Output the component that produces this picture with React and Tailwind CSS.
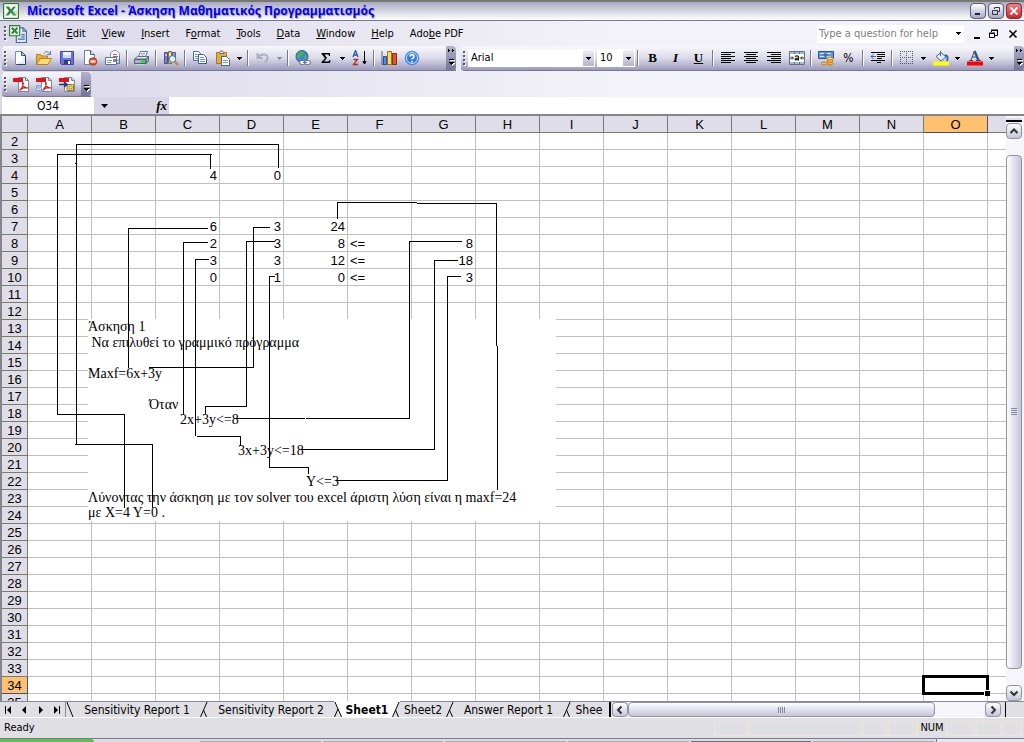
/* ═══════════════════════════════════════════════════════════════
   App.jsx — Spreadsheet window (menus, toolbars, sheet, tabs)
   ═══════════════════════════════════════════════════════════════ */

import { useState } from 'react'
import clsx from 'clsx'

const COLUMNS = ['A', 'B', 'C', 'D', 'E', 'F', 'G', 'H', 'I', 'J', 'K', 'L', 'M', 'N', 'O']
const ROWS = Array.from({ length: 34 }, (_, i) => i + 2)

const CELLS = {
  C4: 4, D4: 0,
  C7: 6, D7: 3, E7: 24,
  C8: 2, D8: 3, E8: 8, F8: '<=', G8: 8,
  C9: 3, D9: 3, E9: 12, F9: '<=', G9: 18,
  C10: 0, D10: 1, E10: 0, F10: '<=', G10: 3,
}

const MENUS = [
  ['', 'F', 'ile'],
  ['', 'E', 'dit'],
  ['', 'V', 'iew'],
  ['', 'I', 'nsert'],
  ['F', 'o', 'rmat'],
  ['', 'T', 'ools'],
  ['', 'D', 'ata'],
  ['', 'W', 'indow'],
  ['', 'H', 'elp'],
  ['Ado', 'b', 'e PDF'],
]

// Connectors between the cells and the exercise text, in sheet coordinates
const CONNECTORS = [
  'M212 154.5H57.5V414.5H124.5V508M210.5 154V169',
  'M278.5 168V144.5H76.5V444.5M75 444.5H152.5V508M75 163.5h1',
  'M208 228.5H128.5V368',
  'M208 242.5H183.5V415',
  'M209 259.5H195.5V436M197 436.5H240.5V446',
  'M270 227.5H253.5V367.5H149',
  'M275 241.5H246.5V406.5H205.5V414',
  'M275 276.5H269.5V467.5H308.5V474',
  'M337.5 219V202.5H417M417 203.5H496.5V346M497.5 346V490',
  'M462 241.5H409.5V418.5H306M305 418.5H236',
  'M458 260.5H434.5V449.5H301',
  'M461 276.5H447.5V480.5H336',
]

/* ── Small shared pieces ─────────────────────────────────────── */

function Icon({ children, size = 16 }) {
  return (
    <svg width={size} height={size} viewBox="0 0 16 16" fill="none" aria-hidden="true" className="shrink-0">
      {children}
    </svg>
  )
}

function Arrow({ fill = '#000' }) {
  return (
    <svg width="5" height="3" viewBox="0 0 5 3" shapeRendering="crispEdges" aria-hidden="true">
      <path d="M0 0h5v1H0zM1 1h3v1H1zM2 2h1v1H2z" fill={fill} />
    </svg>
  )
}

function Tool({ label, children }) {
  return (
    <button type="button" aria-label={label} className="flex h-6 w-[23px] shrink-0 items-center justify-center">
      {children}
    </button>
  )
}

function Drop({ label, fill }) {
  return (
    <button type="button" aria-label={label} className="flex h-6 w-[11px] shrink-0 items-center justify-center">
      <Arrow fill={fill} />
    </button>
  )
}

function Sep() {
  return (
    <span className="flex h-6 w-[6px] shrink-0 items-center justify-center">
      <span className="h-4 w-[2px] border-r border-white bg-[#77769c]" />
    </span>
  )
}

function Grip() {
  return (
    <svg width="3" height="15" viewBox="0 0 3 15" shapeRendering="crispEdges" aria-hidden="true" className="mx-[2px] shrink-0">
      {[0, 4, 8, 12].map(y => (
        <g key={y}>
          <path d={`M1 ${y + 1}h2v2H1z`} fill="#fff" />
          <path d={`M0 ${y}h2v2H0z`} fill="#545478" />
        </g>
      ))}
    </svg>
  )
}

function ToolbarEnd({ more }) {
  return (
    <button
      type="button"
      aria-label="Toolbar options"
      className="flex h-full w-[10px] shrink-0 flex-col items-center justify-end rounded-r-sm bg-linear-to-b from-[#b4b3ca] to-[#75749a] pb-1"
    >
      <svg width="7" height="18" viewBox="0 0 7 18" shapeRendering="crispEdges" aria-hidden="true">
        {more && <path d="M0 1h1v1h1v1H1v1H0zM4 1h1v1h1v1H5v1H4z" fill="#000" />}
        <path d="M2 12h5v1H2zM2 15h5v1H6v1H5v1H4v-1H3z" fill="#fff" />
        <path d="M1 11h5v1H1zM1 14h5v1H5v1H4v1H3v-1H2v-1H1z" fill="#000" />
      </svg>
    </button>
  )
}

const bar = 'flex h-[25px] items-center rounded-l-sm border-b border-[#77769c] bg-linear-to-b from-[#f8f8fc] via-[#dcdbe8] to-[#9c9abb]'

/* ── Icons ───────────────────────────────────────────────────── */

function ExcelMark() {
  return (
    <>
      <path d="M.5.5h15v15H.5z" fill="#cfe6c8" stroke="#2f7a3b" />
      <path d="M2 2h12v12H2z" fill="#fff" />
      <path d="M2.500 3.500H6l2 3 2.500-3H13L9.500 8l4 4.500H10L8 9.500l-2.500 3h-3L6 8z" fill="#2a8a3c" />
      <path d="M10 9h4M10 11h4" stroke="#7ab884" />
    </>
  )
}

function PageIcon() {
  return (
    <>
      <path d="M2.500 1.500h6l4 4v9h-10z" fill="#fff" stroke="#7b92b8" />
      <path d="M12.500 5.500v9h-9" stroke="#27406e" />
      <path d="M8.500 1.500v4h4z" fill="#b9cce8" stroke="#39598c" />
      <path d="M11 7v6H5" stroke="#cddcf1" />
    </>
  )
}

function FolderIcon() {
  return (
    <>
      <path d="M.5 14V4.500h4l1 1.500h6v3" fill="#e8ab3e" stroke="#b5831f" />
      <path d="M.5 14.500 4 8.500h11.500L12 14.500z" fill="#ffd877" stroke="#b78319" />
      <path d="M8 3.500c1-2.500 4-2.500 5.500 0M14.500 1v3.500H11" stroke="#5873a4" />
    </>
  )
}

function SaveIcon() {
  return (
    <>
      <path d="M1.500 1.500h13v13h-12l-1-1z" fill="#6a74dd" stroke="#4147a8" />
      <path d="M4 2h8v6H4z" fill="#f1f4fd" />
      <path d="M4 5h8v3H4z" fill="#cfd8f4" />
      <path d="M5 10h7v4H5z" fill="#333b80" />
      <path d="M9 11h2v3H9z" fill="#fff" />
    </>
  )
}

function PermissionIcon() {
  return (
    <>
      <path d="M2.500.5h6l4 4v10h-10z" fill="#fff" stroke="#6d83a8" />
      <path d="M8.500.5v4h4" fill="#cfdcf0" stroke="#39598c" />
      <circle cx="11" cy="11.500" r="3.800" fill="#e4562e" stroke="#b53a18" />
      <path d="M8.500 11.500h5" stroke="#fff" strokeWidth="2" />
    </>
  )
}

function MailIcon() {
  return (
    <>
      <path d="M5.500 5V3l3-2.500h3l3 3V10h-9z" fill="#f4f6fb" stroke="#8a99b8" />
      <path d="M8 4.500h4M8 6.500h5" stroke="#b7683c" />
      <path d="M.5 7.500h11v7H.5z" fill="#fff" stroke="#5873a4" />
      <path d="M2 10.500h5M2 12.500h4" stroke="#7d94bc" />
      <path d="M8.500 9.500h2v2h-2z" fill="#9fc0e8" stroke="#5873a4" />
      <path d="M12 13.500h2.500V6" stroke="#5873a4" />
    </>
  )
}

function PrintIcon() {
  return (
    <>
      <path d="m4.500 6.500 2-5h7l-2 5" fill="#fff" stroke="#60749c" />
      <path d="M7 3.500h4M6.500 5h4" stroke="#97a8c6" />
      <path d="M.5 9 3.500 6.500h11L12 9z" fill="#e3e9f3" stroke="#5f6f7c" />
      <path d="M.5 9.500H12v4H.5zM12 9.500l2.500-3V11L12 13.500z" fill="#a9b6c0" stroke="#52626f" />
      <path d="M7 10.500h4v2.500H7z" fill="#1fe03b" />
      <path d="M2.500 14.500h8" stroke="#c9d2da" />
    </>
  )
}

function ResearchIcon() {
  return (
    <>
      <path d="M1.500 2.500h3v11h-3z" fill="#7785c4" stroke="#424f90" />
      <path d="M5.500 1.500h3v12h-3z" fill="#e7c069" stroke="#8a6b25" />
      <path d="M9.500 2.500h3v9h-3z" fill="#8a9fcb" stroke="#4a5f95" />
      <path d="M2 5h2M6 4h2M6 6h2" stroke="#fff" />
      <circle cx="9.500" cy="9" r="3.300" fill="#dff0fb" stroke="#4c78a8" />
      <path d="m12 11.500 3 3.500" stroke="#b98743" strokeWidth="2" />
    </>
  )
}

function CopyIcon() {
  return (
    <>
      <path d="M1.500 1.500h5l2 2v7h-7z" fill="#fff" stroke="#4a6ba8" />
      <path d="M3 4.500h4M3 6.500h4M3 8.500h4" stroke="#6f94d2" />
      <path d="M6.500 4.500h5l3 3v6h-8z" fill="#fff" stroke="#3b5c99" />
      <path d="M8 7.500h4M8 9.500h5M8 11.500h5" stroke="#6f94d2" />
    </>
  )
}

function PasteIcon() {
  return (
    <>
      <path d="M1.500 2.500h10v11h-10z" fill="#e3ab40" stroke="#a5782a" />
      <path d="M4.500 3.500v-1l1-1.500h2l1 1.500v1z" fill="#e9e9ee" stroke="#6b6b74" />
      <path d="M6.500 6.500h5l3 3v6h-8z" fill="#fff" stroke="#4a6390" />
      <path d="M8 10.500h5M8 12.500h5" stroke="#6f94d2" />
    </>
  )
}

function UndoIcon() {
  return (
    <path d="M2.500 3v5h5M3 7.500C5 4 13 3 12.500 8c0 2-1.500 3.500-3 4.500" stroke="#aeadc4" strokeWidth="2" />
  )
}

function LinkIcon() {
  return (
    <>
      <circle cx="7" cy="6.500" r="6" fill="#3f86d6" stroke="#2c5c93" />
      <path d="M3 3c2-2 4-2 6-1L8 5 5 6 4 9 1.500 7zM9 6l3-1 .5 3L10 9z" fill="#45b54c" />
      <rect x="4.500" y="10.500" width="6" height="4" rx="2" fill="#eef0f4" stroke="#667080" />
      <rect x="9.500" y="10.500" width="6" height="4" rx="2" fill="#eef0f4" stroke="#667080" />
      <path d="M8 12.500h4" stroke="#667080" />
    </>
  )
}

function SumIcon() {
  return (
    <path d="M3.500 3h8.500v3h-1c0-1-.5-1.500-1.500-1.500H6.500L9 8l-3 3.500h3.500c1 0 1.500-.5 2-1.500h1L12 13H3.500v-1L7 8.200 3.500 4z" fill="#000" />
  )
}

function SortIcon() {
  return (
    <>
      <path d="m1 7 2.500-6.500L6 7M2 5h3" stroke="#2a55b0" strokeWidth="1.300" />
      <path d="M1.500 9.500h4l-4 5h4.500" stroke="#b0302a" strokeWidth="1.300" />
      <path d="M12.500 1v12M11 11.500h3L12.500 14z" stroke="#000" fill="#000" />
    </>
  )
}

function ChartIcon() {
  return (
    <>
      <path d="M1 1v13.500h15" stroke="#4a5f8a" />
      <path d="M2.500 6.500h3v8h-3z" fill="#4f8de6" stroke="#2a4f94" />
      <path d="M6.500 1.500h4v13h-4z" fill="#ffd75a" stroke="#96741c" />
      <path d="M11.500 3.500h4v11h-4z" fill="#e05728" stroke="#8c2d10" />
    </>
  )
}

function HelpIcon() {
  return (
    <>
      <circle cx="8" cy="8" r="6.800" fill="#2f7be0" stroke="#4a86d4" />
      <circle cx="8" cy="8" r="5.500" stroke="#cfe4ff" />
      <path d="M6 6.500C6 4 10.300 4 10 6.500 10 8 8 8 8 9.500M8 11v1.500" stroke="#fff" strokeWidth="1.600" />
    </>
  )
}

function AlignIcon({ d }) {
  return <path d={d} stroke="#000" shapeRendering="crispEdges" />
}

function MergeIcon() {
  return (
    <>
      <path d="M.5 1.500h15v13H.5z" fill="#fff" stroke="#5f7186" />
      <path d="M1 3h14M1 13h14" stroke="#a7bad0" strokeWidth="2" />
      <path d="M5.500 1v3M10.500 1v3M5.500 12v3M10.500 12v3" stroke="#5f7186" />
      <path d="M1 8h3M15 8h-3M3 6.500 4.500 8 3 9.500M13 6.500 11.500 8l1.500 1.500" stroke="#222" />
      <path d="M6 6.500c2-1 3.500-.5 3.500.5v3.500M9 8c-4 0-3.500 3 0 1.500" stroke="#111" strokeWidth="1.200" />
    </>
  )
}

function CurrencyIcon() {
  return (
    <>
      <path d="M.5 1.500h15v7H.5z" fill="#5f93de" stroke="#2d5799" />
      <path d="M2 3.500h11M2 6.500h11" stroke="#dbe9fb" />
      <circle cx="7.500" cy="5" r="2" fill="#3a6cba" />
      <ellipse cx="12" cy="13.500" rx="3" ry="1.500" fill="#f6b93c" stroke="#c27d12" />
      <ellipse cx="12" cy="11" rx="3" ry="1.500" fill="#f6c452" stroke="#c27d12" />
      <ellipse cx="12" cy="8.500" rx="3" ry="1.500" fill="#ffd97a" stroke="#c27d12" />
      <ellipse cx="6" cy="13.500" rx="2.500" ry="1.500" fill="#f6c452" stroke="#c27d12" />
    </>
  )
}

function IndentIcon() {
  return (
    <>
      <path d="M1 2.500h14M7 4.500h8M7 6.500h8M7 8.500h5M1 10.500h14M7 12.500h4" stroke="#000" shapeRendering="crispEdges" />
      <path d="M6 6.500H1M3.500 4 1 6.500 3.500 9" stroke="#3b62ad" />
    </>
  )
}

function BordersIcon() {
  return (
    <path
      d="M1.500 1v13M7.500 1v13M13.500 1v13M1 1.500h13M1 7.500h13M1 13.500h13"
      stroke="#55557a"
      strokeDasharray="1 1"
      shapeRendering="crispEdges"
    />
  )
}

function FillIcon() {
  return (
    <>
      <path d="m3 6.500 5-4 5 4.500-5 4z" fill="#dfe9f8" stroke="#4c6694" />
      <path d="M7.500 1v5" stroke="#4c6694" />
      <path d="M12 5c3 .5 3 3 2 6" stroke="#2f64c0" strokeWidth="2" />
      <path d="M0 11.500h16V15.500H0z" fill="#ff0" />
    </>
  )
}

function FontColorIcon() {
  return (
    <>
      <path d="M4 10 7.500 1M5 7h6M2 10.500h4M9 10.500h5" stroke="#35507f" />
      <path d="m7.500 1 4 9.500" stroke="#35507f" strokeWidth="2.400" />
      <path d="M0 11.500h16V15.500H0z" fill="red" />
    </>
  )
}

function PdfIcon({ variant }) {
  return (
    <>
      <path d="M5.500 1.500h7l3 3v11h-10z" fill="#fff" stroke="#85858f" />
      <path d="M12.500 1.500v3h3" stroke="#85858f" />
      {variant === 'review' ? (
        <>
          <path d="M8 8.500h6.500v6H8z" fill="#ecd95e" stroke="#93812a" />
          <circle cx="11.500" cy="11.500" r="1.500" fill="#fff" stroke="#93812a" />
          <path d="M0 8.500h7M5 6 8 8.500 5 11" stroke="#1c2f86" strokeWidth="1.600" />
        </>
      ) : (
        <path d="M9.500 6c2 2-1 7-3 8.500M9.500 7c0 4 3 5 5.500 5-3-1-6 0-8 2" stroke="#d8121a" strokeWidth="1.200" />
      )}
      {variant === 'mail' && <path d="M.5 9.500h5v5h-5zM.5 10 3 12.500 5.500 10" fill="#c8dcf5" stroke="#7fa3d8" />}
      <path d="M0 2h10v4H0z" fill="#e0121b" />
    </>
  )
}

/* ── Window parts ────────────────────────────────────────────── */

function TitleBar() {
  const button = 'flex h-4 w-4 items-center justify-center rounded-sm border bg-linear-to-b'
  return (
    <header className="flex h-[21px] shrink-0 items-center border-t-2 border-b border-t-[#77786f] border-b-[#77769c] bg-linear-to-b from-[#a9a9c4] via-[#d4d4e0] to-white pr-[2px] pl-[3px]">
      <Icon><ExcelMark /></Icon>
      <h1 className="ml-2 flex-1 truncate font-['Open_Sans','Noto_Sans',sans-serif] text-[12px] leading-4 font-bold text-[#0000f0] [text-shadow:1px_1px_1px_#9c9cc0]">
        Microsoft Excel - Άσκηση Μαθηματικός Προγραμματισμός
      </h1>
      <div className="flex gap-[2px]">
        <button type="button" aria-label="Minimize" className={clsx(button, 'border-[#5c5b80] from-white to-[#a9a8c2]')}>
          <Icon><path d="M5 11h5" stroke="#222244" strokeWidth="2" /></Icon>
        </button>
        <button type="button" aria-label="Restore" className={clsx(button, 'border-[#5c5b80] from-white to-[#a9a8c2]')}>
          <Icon><path d="M6.500 6V4.500h5v4H10M4.500 7.500h5v4h-5z" stroke="#333355" /></Icon>
        </button>
        <button type="button" aria-label="Close" className={clsx(button, 'border-[#8d2433] from-[#e8808a] to-[#c9222f]')}>
          <Icon><path d="m4.500 4.500 7 7M11.500 4.500l-7 7" stroke="#fff" strokeWidth="1.800" /></Icon>
        </button>
      </div>
    </header>
  )
}

function MenuBar() {
  return (
    <div className="flex h-[25px] items-center pl-[2px]">
      <Grip />
      <button type="button" aria-label="Workbook menu" className="flex w-[17px] items-center">
        <Icon size={18}>
          <path d="M6.500 2.500h6l3 3v10h-9z" fill="#dfeafa" stroke="#44699c" />
          <path d="M12.500 2.500v3h3M11 8.500h3M11 10.500h3M8 12.500h6" stroke="#44699c" />
          <path d="M.5.500h9v9h-9z" fill="#e8f3e4" stroke="#2f7a3b" />
          <path d="m2.500 2.500 5 5M7.500 2.500l-5 5" stroke="#2a8a3c" strokeWidth="1.800" />
        </Icon>
      </button>
      <nav className="flex">
        {MENUS.map(([before, key, after]) => (
          <button key={before + key + after} type="button" className="h-5 px-2 text-[11px] leading-4">
            {before}<u>{key}</u>{after}
          </button>
        ))}
      </nav>
      <div className="ml-auto flex h-[18px] w-[147px] items-center bg-white">
        <input
          type="text"
          aria-label="Type a question for help"
          placeholder="Type a question for help"
          className="h-full w-full min-w-0 flex-1 pl-[2px] text-[11px] placeholder:text-[#808080] placeholder:opacity-100"
        />
        <Drop label="Recent questions" />
      </div>
      <div className="flex items-center pr-[3px] pl-[5px]">
        <button type="button" aria-label="Minimize workbook">
          <Icon><path d="M5 12h6" stroke="#000" strokeWidth="2" /></Icon>
        </button>
        <button type="button" aria-label="Restore workbook">
          <Icon><path d="M6.500 6V4.500h6v5H10M4.500 7.500h5v4h-5zM6 4h7M4 7h6" stroke="#000" /></Icon>
        </button>
        <button type="button" aria-label="Close workbook" className="ml-1">
          <Icon><path d="m4.500 4.500 7 7M11.500 4.500l-7 7" stroke="#000" strokeWidth="1.600" /></Icon>
        </button>
      </div>
    </div>
  )
}

function StandardToolbar() {
  return (
    <div role="toolbar" aria-label="Standard" className={clsx(bar, 'w-[454px] shrink-0')}>
      <Grip />
      <Tool label="New"><Icon><PageIcon /></Icon></Tool>
      <Tool label="Open"><Icon><FolderIcon /></Icon></Tool>
      <Tool label="Save"><Icon><SaveIcon /></Icon></Tool>
      <Tool label="Permission"><Icon><PermissionIcon /></Icon></Tool>
      <Tool label="E-mail"><Icon><MailIcon /></Icon></Tool>
      <Sep />
      <Tool label="Print"><Icon><PrintIcon /></Icon></Tool>
      <Sep />
      <Tool label="Research"><Icon><ResearchIcon /></Icon></Tool>
      <Sep />
      <Tool label="Copy"><Icon><CopyIcon /></Icon></Tool>
      <Tool label="Paste"><Icon><PasteIcon /></Icon></Tool>
      <Drop label="Paste options" />
      <Sep />
      <Tool label="Undo"><Icon><UndoIcon /></Icon></Tool>
      <Drop label="Undo history" fill="#8d8ca6" />
      <Sep />
      <Tool label="Hyperlink"><Icon><LinkIcon /></Icon></Tool>
      <Tool label="AutoSum"><Icon><SumIcon /></Icon></Tool>
      <Drop label="More functions" />
      <Tool label="Sort ascending"><Icon><SortIcon /></Icon></Tool>
      <Sep />
      <Tool label="Chart wizard"><Icon><ChartIcon /></Icon></Tool>
      <Tool label="Help"><Icon><HelpIcon /></Icon></Tool>
      <span className="flex-1" />
      <ToolbarEnd more />
    </div>
  )
}

function ComboBox({ label, value, className }) {
  return (
    <div className={clsx('grid h-[18px] shrink-0 items-center border border-white bg-white', className)}>
      <select
        aria-label={label}
        defaultValue={value}
        className="col-start-1 row-start-1 h-4 w-full appearance-none pl-[2px] text-[11px] leading-4"
      >
        <option>{value}</option>
      </select>
      <span className="pointer-events-none col-start-1 row-start-1 flex h-4 w-[11px] items-center justify-center justify-self-end bg-linear-to-b from-[#f0f0f6] to-[#b4b3cb]">
        <Arrow />
      </span>
    </div>
  )
}

function FormattingToolbar() {
  const letter = "font-['Liberation_Serif',serif] text-[13px] leading-4 font-bold"
  return (
    <div role="toolbar" aria-label="Formatting" className={clsx(bar, 'min-w-0 flex-1')}>
      <Grip />
      <ComboBox label="Font" value="Arial" className="w-[127px]" />
      <ComboBox label="Font size" value="10" className="ml-[2px] w-[38px]" />
      <Sep />
      <Tool label="Bold"><span className={letter}>B</span></Tool>
      <Tool label="Italic"><span className={clsx(letter, 'italic')}>I</span></Tool>
      <Tool label="Underline"><span className={clsx(letter, 'underline')}>U</span></Tool>
      <Sep />
      <Tool label="Align left"><Icon><AlignIcon d="M1 2.500h14M1 4.500h10M1 6.500h14M1 8.500h10M1 10.500h14M1 12.500h10" /></Icon></Tool>
      <Tool label="Center"><Icon><AlignIcon d="M1 2.500h14M3 4.500h10M1 6.500h14M3 8.500h10M1 10.500h14M3 12.500h10" /></Icon></Tool>
      <Tool label="Align right"><Icon><AlignIcon d="M1 2.500h14M5 4.500h10M1 6.500h14M5 8.500h10M1 10.500h14M5 12.500h10" /></Icon></Tool>
      <Tool label="Merge and center"><Icon><MergeIcon /></Icon></Tool>
      <Sep />
      <Tool label="Currency style"><Icon><CurrencyIcon /></Icon></Tool>
      <Tool label="Percent style"><span className="text-[12px] leading-4">%</span></Tool>
      <Sep />
      <Tool label="Decrease indent"><Icon><IndentIcon /></Icon></Tool>
      <Sep />
      <Tool label="Borders"><Icon><BordersIcon /></Icon></Tool>
      <Drop label="Border styles" />
      <Tool label="Fill color"><Icon><FillIcon /></Icon></Tool>
      <Drop label="Fill colors" />
      <Tool label="Font color"><Icon><FontColorIcon /></Icon></Tool>
      <Drop label="Font colors" />
      <span className="flex-1" />
      <ToolbarEnd more />
    </div>
  )
}

function PdfToolbar() {
  return (
    <div role="toolbar" aria-label="PDFMaker" className={clsx(bar, 'ml-[2px] w-[89px]')}>
      <Grip />
      <Tool label="Convert to PDF"><Icon><PdfIcon /></Icon></Tool>
      <Tool label="Convert to PDF and email"><Icon><PdfIcon variant="mail" /></Icon></Tool>
      <Tool label="Convert to PDF and send for review"><Icon><PdfIcon variant="review" /></Icon></Tool>
      <span className="flex-1" />
      <ToolbarEnd />
    </div>
  )
}

function FormulaBar() {
  return (
    <div className="flex h-[17px] items-stretch pl-[2px]">
      <input
        type="text"
        aria-label="Name box"
        defaultValue="O34"
        className="w-[92px] bg-white text-center text-[12px] leading-4"
      />
      <div className="flex w-[75px] items-center justify-between bg-[#d8d6e6] px-[2px]">
        <button type="button" aria-label="Names" className="flex h-4 w-4 items-center justify-center">
          <svg width="7" height="4" viewBox="0 0 7 4" aria-hidden="true"><path d="M0 0h7L3.500 4z" fill="#000" /></svg>
        </button>
        <button type="button" aria-label="Insert function" className="font-['Liberation_Serif',serif] text-[13px] leading-4 font-bold italic">
          fx
        </button>
      </div>
      <input type="text" aria-label="Formula" className="min-w-0 flex-1 bg-white px-1 text-[12px]" />
    </div>
  )
}

function Sheet() {
  return (
    <table className="w-full table-fixed border-separate border-spacing-0 font-['Liberation_Sans',Arial,sans-serif] text-[13px] leading-[14px]">
      <colgroup>
        <col className="w-[26px]" />
        {COLUMNS.map(col => <col key={col} className="w-16" />)}
        <col />
      </colgroup>
      <thead>
        <tr className="h-[17px]">
          <td className="border-r border-b border-[#7b7b68] bg-[#dfdee8] p-0" />
          {COLUMNS.map(col => (
            <th
              key={col}
              scope="col"
              className={clsx(
                'border-r border-b p-0 pt-[2px] font-normal',
                col === 'O' ? 'border-[#4c4c70] bg-[#ffc06f]' : 'border-[#7b7b68] bg-[#dfdee8]'
              )}
            >
              {col}
            </th>
          ))}
          <td className="border-b border-[#7b7b68] bg-[#dfdee8] p-0" />
        </tr>
      </thead>
      <tbody>
        {ROWS.map(row => (
          <tr key={row} className="h-[17px]">
            <th
              scope="row"
              className={clsx(
                'border-r border-b p-0 pt-[2px] font-normal',
                row === 34 ? 'border-[#4c4c70] bg-[#ffc06f]' : 'border-[#7b7b68] bg-[#dfdee8]'
              )}
            >
              {row}
            </th>
            {COLUMNS.map(col => {
              const value = CELLS[col + row]
              return (
                <td
                  key={col}
                  className={clsx(
                    'relative border-r border-b border-[#c0c0c0] bg-white px-[2px] pt-[2px] pb-0',
                    typeof value === 'number' && 'text-right'
                  )}
                >
                  {value}
                  {col + row === 'O34' && (
                    <span className="absolute -inset-[2px] z-10 border-[3px] border-black">
                      <span className="absolute -right-1 -bottom-1 h-[6px] w-[6px] border-t border-l border-white bg-black" />
                    </span>
                  )}
                </td>
              )
            })}
            <td className="border-b border-[#c0c0c0] bg-white p-0" />
          </tr>
        ))}
      </tbody>
    </table>
  )
}

// Exercise text pasted over the cells; the rows share the object's height evenly
function ExerciseText() {
  return (
    <div className="absolute top-[203px] left-[86px] grid h-[202px] w-[468px] auto-rows-fr bg-white font-['Liberation_Serif','Times_New_Roman',serif] text-[14px] leading-4 whitespace-pre text-black">
      <p>Άσκηση 1</p>
      <p> Να επιλυθεί το γραμμικό πρόγραμμα</p>
      <p> </p>
      <p>Maxf=6x+3y</p>
      <p> </p>
      <p className="pl-[61px]">Όταν</p>
      <p className="pl-[92px]">2x+3y&lt;=8</p>
      <p> </p>
      <p className="pl-[150px]">3x+3y&lt;=18</p>
      <p> </p>
      <p className="pl-[218px]">Y&lt;=3</p>
      <p>Λύνοντας την άσκηση με τον solver του excel άριστη λύση είναι η maxf=24</p>
      <p>με Χ=4 Υ=0 .</p>
    </div>
  )
}

function Connectors() {
  return (
    <svg
      width="560"
      height="400"
      viewBox="2 116 560 400"
      fill="none"
      stroke="#000"
      shapeRendering="crispEdges"
      aria-hidden="true"
      className="absolute top-0 left-0"
    >
      {CONNECTORS.map(d => <path key={d} d={d} />)}
    </svg>
  )
}

const scrollButton = 'flex shrink-0 items-center justify-center rounded-sm border border-[#9291a8] bg-linear-to-b from-white to-[#c6c5d8]'

function VerticalScrollbar() {
  return (
    <div className="flex w-[18px] shrink-0 flex-col bg-[#f6f6fa] pt-[2px] pr-[2px]">
      <div className="mb-[1px] h-1 border-b-2 border-black bg-[#dfdee8]" />
      <button type="button" aria-label="Scroll up" className={clsx(scrollButton, 'h-4')}>
        <Icon><path d="m4.500 10 3.500-3.500L11.500 10" stroke="#333" strokeWidth="2" /></Icon>
      </button>
      <div className="flex min-h-0 flex-1 flex-col py-4">
        <div className="flex flex-1 items-center justify-center rounded-sm border border-[#9291a8] bg-linear-to-r from-white to-[#c6c5d8]">
          <svg width="7" height="8" viewBox="0 0 7 8" shapeRendering="crispEdges" aria-hidden="true">
            <path d="M0 .5h6M0 2.500h6M0 4.500h6M0 6.500h6" stroke="#8786a4" />
          </svg>
        </div>
      </div>
      <button type="button" aria-label="Scroll down" className={clsx(scrollButton, 'h-4')}>
        <Icon><path d="M4.500 6.500 8 10l3.500-3.500" stroke="#333" strokeWidth="2" /></Icon>
      </button>
    </div>
  )
}

// Slanted divider between two tabs; the active tab fills its side with white
function TabEdge({ kind, active }) {
  return (
    <svg width="8" height="17" viewBox="0 0 8 17" aria-hidden="true" className="shrink-0">
      {active === 'right' && <path d="M0 0h8v16L6.500 16z" fill="#fff" />}
      {active === 'left' && <path d="M0 0h7L.5 16H0z" fill="#fff" />}
      {kind === 'open' && <path d="M.5 0 7 16" stroke="#000" />}
      {kind === 'next' && <path d="M7.500 0 .5 16M3.500 9 6.500 16" stroke="#000" fill="none" />}
      {kind === 'before' && <path d="M.5 0 7.500 16M4 8 .5 16" stroke="#000" fill="none" />}
      <path d="M0 .5h8" stroke={active ? '#fff' : '#8a8a94'} />
    </svg>
  )
}

function TabStrip() {
  const [active, setActive] = useState('Sheet1')
  const tab = (name, className) => (
    <button
      type="button"
      role="tab"
      aria-selected={active === name}
      onClick={() => setActive(name)}
      className={clsx(
        'h-4 shrink-0 border-t text-center whitespace-nowrap',
        active === name ? 'border-white bg-white font-bold' : 'border-[#8a8a94]',
        className
      )}
    >
      {name}
    </button>
  )
  const nav = [
    ['First sheet', 'M5 4v8h1V4zM11 4v8L7 8z'],
    ['Previous sheet', 'M10 4v8L6 8z'],
    ['Next sheet', 'M6 4v8l4-4z'],
    ['Last sheet', 'M10 4v8h1V4zM5 4v8l4-4z'],
  ]
  return (
    <div className="flex h-[17px] shrink-0 border-b border-white bg-[#e0dfe3]">
      <div className="flex w-[66px] shrink-0 border-t border-r border-[#8a8a94]">
        {nav.map(([label, d]) => (
          <button key={label} type="button" aria-label={label} className="flex h-4 flex-1 items-center justify-center">
            <Icon><path d={d} fill="#000" /></Icon>
          </button>
        ))}
      </div>
      <div role="tablist" className="flex w-[541px] shrink-0 overflow-hidden text-[12px] leading-4">
        <TabEdge kind="open" />
        {tab('Sensitivity Report 1', 'w-[126px]')}
        <TabEdge kind="next" />
        {tab('Sensitivity Report 2', 'w-[126px]')}
        <TabEdge kind="before" active="right" />
        {tab('Sheet1', 'w-[50px]')}
        <TabEdge kind="next" active="left" />
        {tab('Sheet2', 'w-[46px]')}
        <TabEdge kind="next" />
        {tab('Answer Report 1', 'w-[109px]')}
        <TabEdge kind="next" />
        {tab('Shee', 'flex-1')}
      </div>
      <div className="flex min-w-0 flex-1 border-t border-[#8a8a94] pl-[2px]">
        <span className="mr-[1px] w-[2px] shrink-0 bg-black" />
        <button type="button" aria-label="Scroll left" className={clsx(scrollButton, 'h-[15px] w-4')}>
          <Icon><path d="M9.500 4.500 6 8l3.500 3.500" stroke="#333" strokeWidth="2" /></Icon>
        </button>
        <div className="flex min-w-0 flex-1 bg-[#f6f6fa]">
          <div className="flex h-[15px] w-[86%] items-center justify-center rounded-sm border border-[#9291a8] bg-linear-to-b from-white to-[#c6c5d8]">
            <svg width="8" height="6" viewBox="0 0 8 6" shapeRendering="crispEdges" aria-hidden="true">
              <path d="M.5 0v6M2.500 0v6M4.500 0v6M6.500 0v6" stroke="#8786a4" />
            </svg>
          </div>
        </div>
        <button type="button" aria-label="Scroll right" className={clsx(scrollButton, 'h-[15px] w-4')}>
          <Icon><path d="M6.500 4.500 10 8l-3.500 3.500" stroke="#333" strokeWidth="2" /></Icon>
        </button>
        <span className="mr-[18px] ml-[2px] w-[3px] shrink-0 border-r border-black bg-[#dfdee8]" />
      </div>
    </div>
  )
}

function StatusBar() {
  const box = 'h-[15px] shrink-0 border border-[#ebe8d6]'
  return (
    <footer className="shrink-0 bg-[#e0dfe3]">
      <div className="flex h-[21px] items-center gap-[1px] border-b border-[#7a7a9e] pr-[2px] pl-1 text-[11px] leading-4">
        <span className="flex-1">Ready</span>
        <span className={clsx(box, 'w-[34px]')} />
        <span className={clsx(box, 'w-[112px]')} />
        <span className={clsx(box, 'w-[25px]')} />
        <span className={clsx(box, 'w-[30px]')} />
        <span className="w-[26px] shrink-0 text-center">NUM</span>
        <span className={clsx(box, 'w-[29px]')} />
        <span className={clsx(box, 'w-[25px]')} />
        <span className={clsx(box, 'w-[20px]')} />
      </div>
      <div className="flex h-[3px] gap-[2px] bg-[#dcdce4]">
        <span className="w-[94px] rounded-tr-sm bg-[#5fc04a]" />
        <span className="w-[102px]" />
        <span className="h-[1px] flex-1 self-end bg-[#a9a9b0]" />
        <span className="h-[1px] flex-1 self-end bg-[#a9a9b0]" />
        <span className="h-[1px] flex-1 self-end bg-[#a9a9b0]" />
        <span className="h-[1px] flex-1 self-end bg-[#a9a9b0]" />
        <span className="h-[1px] flex-1 self-end bg-[#66766f]" />
        <span className="h-[1px] flex-1 self-end bg-[#a9a9b0]" />
        <span className="w-[88px] border-l border-[#7a7a9e] bg-[#e6e6ee]" />
      </div>
    </footer>
  )
}

export default function App() {
  return (
    <div className="flex h-screen flex-col overflow-hidden bg-white font-['DejaVu_Sans_Condensed','DejaVu_Sans',Tahoma,sans-serif] text-black">
      <TitleBar />

      {/* Command bars */}
      <div className="shrink-0 bg-linear-to-r from-[#dad8e8] to-[#f3f2f8] to-60%">
        <MenuBar />
        <div className="flex gap-[5px] pl-[2px]">
          <StandardToolbar />
          <FormattingToolbar />
        </div>
        <div className="h-[1px]" />
        <PdfToolbar />
        <FormulaBar />
      </div>

      {/* Sheet */}
      <main className="flex min-h-0 flex-1 border-t-2 border-l-2 border-[#84848c]">
        <div className="relative min-w-0 flex-1 overflow-hidden">
          <Sheet />
          <ExerciseText />
          <Connectors />
        </div>
        <VerticalScrollbar />
      </main>

      <TabStrip />
      <StatusBar />
    </div>
  )
}
